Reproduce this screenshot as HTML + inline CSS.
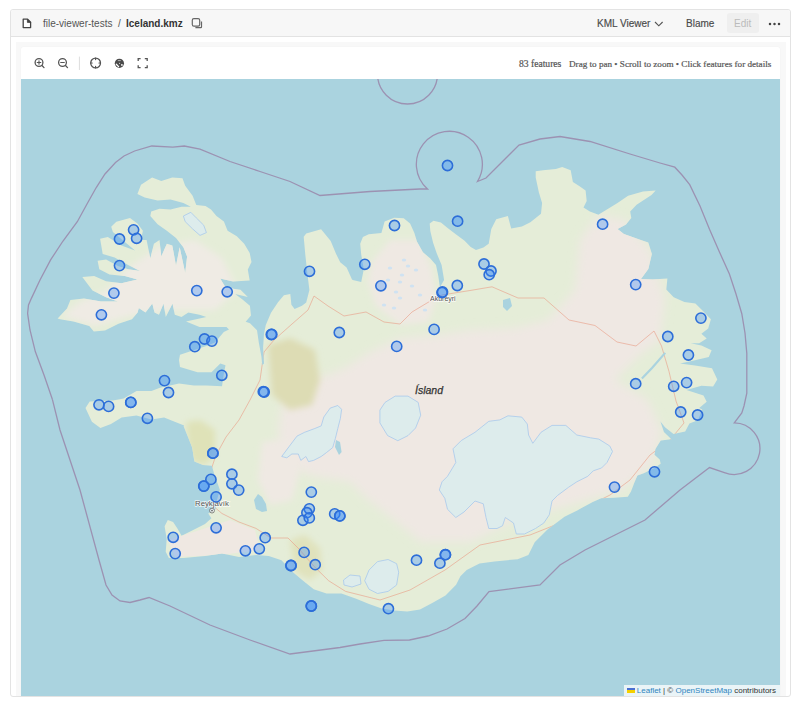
<!DOCTYPE html>
<html><head><meta charset="utf-8">
<style>
html,body{margin:0;padding:0;background:#fff;width:800px;height:706px;overflow:hidden}
body{font-family:"Liberation Sans",sans-serif;position:relative}
.card{position:absolute;left:10px;top:9px;width:779px;height:686px;border:1px solid #e3e3e3;border-radius:3px;overflow:hidden;background:#fff}
.hdr{position:absolute;left:0;top:0;width:779px;height:26px;background:#f7f7f7;border-bottom:1px solid #e3e3e3}
.t{position:absolute;white-space:nowrap;font-size:10px;line-height:12px}
.gray{position:absolute;left:5px;top:32px;width:770px;height:660px;background:#f8f8f8}
.panel{position:absolute;left:10px;top:37px;width:759px;height:660px;background:#fff;border-radius:2px;box-shadow:0 0 1px rgba(0,0,0,0.08)}
.map{position:absolute;left:10px;top:69px;width:759px;height:617px;overflow:hidden}
.attr{position:absolute;right:0;bottom:0;height:11px;background:rgba(255,255,255,0.75);font-size:8px;line-height:11px;padding:0 4px 0 3px;color:#333;white-space:nowrap}
.attr a{color:#2f84c0;text-decoration:none}
</style></head><body>
<div class="card">
 <div class="hdr">
  <svg style="position:absolute;left:11px;top:8px" width="10" height="11" viewBox="0 0 10 11"><path d="M1.2,1.2 H5.6 L8.6,4.2 V9.6 H1.2 Z" fill="#fff" stroke="#444" stroke-width="1.3" stroke-linejoin="round"/><path d="M5.4,1.2 L8.6,4.4 H5.4 Z" fill="#444" stroke="#444" stroke-width="0.8" stroke-linejoin="round"/></svg>
  <span class="t" style="left:32px;top:8px;color:#555">file-viewer-tests</span>
  <span class="t" style="left:107px;top:8px;color:#555">/</span>
  <span class="t" style="left:115px;top:8px;color:#333;font-weight:bold">Iceland.kmz</span>
  <svg style="position:absolute;left:180px;top:8px" width="12" height="11" viewBox="0 0 12 11"><rect x="1.3" y="0.7" width="7.4" height="7.4" rx="1.6" fill="none" stroke="#666" stroke-width="1.2"/><path d="M4.4,9.6 H9.8 Q10.5,9.6 10.5,8.9 V3.6" fill="none" stroke="#666" stroke-width="1.2"/></svg>
  <span class="t" style="left:586px;top:8px;color:#4a4a4a;-webkit-text-stroke:0.15px #4a4a4a">KML Viewer</span>
  <svg style="position:absolute;left:643px;top:11px" width="10" height="6" viewBox="0 0 10 6"><path d="M1,1 L4.8,4.8 L8.6,1" fill="none" stroke="#555" stroke-width="1.15"/></svg>
  <span class="t" style="left:675px;top:8px;color:#4a4a4a;-webkit-text-stroke:0.15px #4a4a4a">Blame</span>
  <div style="position:absolute;left:716px;top:3px;width:32px;height:20px;background:#efefef;border-radius:3px"></div>
  <span class="t" style="left:723px;top:8px;color:#bbb">Edit</span>
  <svg style="position:absolute;left:757px;top:12px" width="13" height="4" viewBox="0 0 13 4"><circle cx="2" cy="2" r="1.25" fill="#444"/><circle cx="6.5" cy="2" r="1.25" fill="#444"/><circle cx="11" cy="2" r="1.25" fill="#444"/></svg>
 </div>
 <div class="gray"></div>
 <div class="panel">
  <svg style="position:absolute;left:0;top:0" width="160" height="32" viewBox="0 0 160 32">
   <g fill="none" stroke="#555" stroke-width="1.3" stroke-linecap="round">
    <circle cx="18" cy="15.5" r="3.9"/><path d="M21,18.5 L23,20.6"/><path d="M16.2,15.5 H19.8 M18,13.7 V17.3" stroke-width="1.1"/>
    <circle cx="41.5" cy="15.5" r="3.9"/><path d="M44.5,18.5 L46.5,20.6"/><path d="M39.7,15.5 H43.3" stroke-width="1.1"/>
    <path d="M58.4,10 V22.6" stroke="#ddd" stroke-width="1"/>
    <circle cx="74.6" cy="16" r="4.9"/><path d="M74.6,11.1 V12.6 M74.6,19.4 V20.9 M69.7,16 H71.2 M78,16 H79.5" stroke-width="1.2"/>
   </g>
   <circle cx="98.4" cy="16.3" r="4.6" fill="#4a4a4a"/>
   <path d="M95.3,17.2 L97.6,19.6" stroke="#fff" stroke-width="1.3" stroke-linecap="round"/>
   <circle cx="100.9" cy="17.9" r="0.9" fill="#fff"/>
   <path d="M97.2,13.6 H99.4" stroke="#bbb" stroke-width="0.9" stroke-linecap="round"/>
   <circle cx="98.6" cy="16.3" r="0.6" fill="#ddd"/>
   <g fill="none" stroke="#555" stroke-width="1.3">
    <path d="M117.2,14 V11.7 H119.6 M123.8,11.7 H126.2 V14 M126.2,18.3 V20.7 H123.8 M119.6,20.7 H117.2 V18.3"/>
   </g>
  </svg>
  <span style="position:absolute;left:498px;top:11px;font-family:'Liberation Serif',serif;font-size:9.6px;line-height:12px;color:#555;-webkit-text-stroke:0.2px #555;white-space:nowrap">83 features</span>
  <span style="position:absolute;left:548px;top:11px;font-family:'Liberation Serif',serif;font-size:9.15px;line-height:12px;color:#555;-webkit-text-stroke:0.2px #555;white-space:nowrap">Drag to pan &bull; Scroll to zoom &bull; Click features for details</span>
 </div>
 <div class="map"><svg width="759" height="617" viewBox="0 0 759 617" style="display:block">
<rect width="759" height="617" fill="#aad3df"/>
<path d="M31.5,320.8 L23.0,296.0 L14.3,272.6 L9.0,251.0 L6.6,234.4 L7.5,226.0 L10.5,219.1 L19.0,201.0 L29.6,180.9 L42.0,162.0 L56.3,142.7 L66.0,125.0 L75.4,108.3 L84.0,95.0 L94.5,83.5 L103.0,77.0 L113.6,72.0 L130.8,67.0 L151.9,68.2 L163.3,67.0 L179.0,70.1 L209.0,82.5 L239.0,92.5 L269.0,102.5 L299.0,116.5 L349.0,112.5 L399.0,110.0 L406.5,110.0 A33,33 0 1 1 456.5,102.5 L465.0,99.0 L498.0,66.0 L519.0,60.0 L539.0,57.5 L569.0,62.5 L609.0,75.0 L639.0,84.0 L653.8,88.2 L661.0,96.0 L668.7,105.6 L679.0,127.0 L688.5,150.3 L698.0,172.0 L708.4,195.0 L715.0,215.0 L720.8,234.7 L724.0,254.0 L725.8,274.4 L725.8,314.2 L723.0,327.0 L720.8,334.0 L713.3,343.9 A25.8,25.8 0 1 1 703.4,393.6 L688.5,388.6 L659.0,411.0 L624.0,441.0 L594.0,456.0 L564.0,471.0 L539.0,486.0 L519.0,506.0 L468.0,512.5 L456.0,527.0 L444.0,539.5 L426.0,550.0 L407.0,557.0 L388.5,561.0 L363.0,561.4 L339.0,565.0 L319.0,568.5 L269.0,575.0 L229.0,561.0 L189.0,546.0 L149.0,527.0 L128.0,518.5 L119.0,521.0 L109.0,523.5 L99.0,522.0 L91.0,516.0 L85.0,506.0 L78.0,481.0 L59.0,411.0 L39.0,351.0 L31.5,320.8" fill="none" stroke="#9c92b2" stroke-width="1.3"/>
<circle cx="386.5" cy="-5" r="30" fill="none" stroke="#9c92b2" stroke-width="1.3"/>
<filter id="blur" x="-10%" y="-10%" width="120%" height="120%"><feGaussianBlur stdDeviation="5"/></filter><filter id="blur2" x="-20%" y="-20%" width="140%" height="140%"><feGaussianBlur stdDeviation="3"/></filter>
<clipPath id="land"><path d="M36.6,239.6 L46.0,229.4 L49.4,220.9 L63.0,219.5 L80.0,222.6 L97.0,222.6 L85.1,218.3 L71.5,211.5 L61.3,197.9 L73.2,197.1 L85.1,202.2 L100.4,204.2 L116.5,200.5 L103.8,197.1 L88.5,195.4 L78.3,190.3 L76.6,181.8 L85.1,180.4 L97.0,186.9 L107.2,190.3 L119.1,192.0 L107.2,186.0 L93.6,178.4 L81.7,175.0 L79.1,159.7 L86.8,158.0 L100.4,166.5 L114.0,171.6 L102.1,161.4 L91.9,152.9 L90.2,147.8 L95.3,142.7 L109.0,138.9 L116.4,144.4 L121.9,151.8 L120.0,161.0 L125.6,161.0 L129.3,179.4 L132.9,164.7 L138.5,161.0 L140.3,177.5 L145.8,164.7 L151.3,166.5 L155.0,186.7 L158.7,168.3 L164.2,194.1 L166.1,177.5 L162.4,168.3 L155.0,159.1 L145.8,151.8 L136.6,145.3 L129.3,137.0 L130.2,132.4 L138.5,129.7 L149.5,130.6 L160.6,127.8 L169.8,127.8 L162.4,124.1 L149.5,120.5 L136.6,121.4 L123.7,118.6 L116.4,114.9 L120.0,105.7 L131.1,98.4 L140.3,102.0 L151.3,98.4 L161.5,99.3 L164.2,106.7 L171.6,116.8 L175.3,126.0 L184.5,126.9 L190.0,130.6 L195.5,137.0 L202.9,142.6 L206.6,151.8 L215.8,157.3 L223.2,164.7 L228.7,173.9 L230.5,183.1 L226.8,190.4 L228.7,201.5 L212.1,202.4 L199.2,199.6 L204.7,208.8 L219.5,210.7 L226.8,218.0 L214.1,215.1 L221.5,220.4 L228.9,226.8 L230.0,236.4 L224.7,242.7 L229.0,244.3 L236.0,251.3 L237.8,263.5 L240.4,277.5 L241.3,286.3 L243.0,284.5 L242.1,268.8 L243.0,254.8 L244.8,246.0 L250.0,233.8 L257.0,223.3 L262.9,216.2 L269.3,215.1 L270.4,225.7 L273.6,230.0 L281.0,226.8 L285.2,223.6 L288.4,210.9 L286.3,193.9 L284.2,174.7 L282.7,157.7 L285.2,154.6 L300.1,150.3 L304.4,155.6 L309.7,162.0 L315.0,174.7 L319.2,183.2 L325.6,188.6 L330.9,200.2 L331.7,200.9 L340.2,203.0 L342.8,190.2 L340.2,175.4 L339.2,164.7 L341.9,157.9 L347.7,155.2 L360.4,154.1 L363.6,142.4 L373.2,138.8 L382.7,139.2 L389.1,144.6 L393.4,154.1 L395.9,162.6 L401.9,173.2 L409.3,179.6 L415.0,186.0 L417.2,196.6 L418.9,208.3 L423.1,200.9 L420.6,186.0 L415.7,174.3 L412.1,163.7 L409.3,152.0 L408.7,144.6 L412.5,141.8 L419.9,143.5 L426.3,148.8 L434.8,155.2 L443.3,161.6 L449.7,167.9 L455.0,171.1 L462.4,168.6 L467.7,164.7 L470.3,149.9 L475.2,140.3 L486.9,137.1 L490.2,149.6 L500.9,147.5 L509.4,143.2 L520.0,134.7 L521.1,124.1 L517.9,113.5 L514.7,98.6 L514.7,92.2 L522.1,91.2 L534.9,90.1 L541.2,88.0 L549.7,91.2 L551.9,102.9 L558.2,107.1 L564.6,111.4 L565.7,122.0 L562.5,128.4 L568.9,132.6 L577.4,135.8 L585.9,130.5 L596.5,124.1 L607.1,116.7 L622.0,112.4 L634.7,111.4 L630.5,116.0 L615.6,125.8 L609.2,132.6 L610.3,139.0 L605.0,145.4 L596.5,150.0 L602.9,154.9 L617.7,160.2 L627.3,163.4 L630.9,175.1 L627.3,190.0 L620.3,199.6 L620.0,200.1 L631.5,200.6 L646.4,199.5 L645.3,210.5 L652.7,218.2 L663.4,222.9 L674.4,224.6 L682.5,232.4 L689.9,240.3 L687.2,249.4 L680.4,254.7 L685.7,259.4 L678.2,264.3 L669.7,264.3 L680.4,266.4 L690.6,271.3 L687.8,278.1 L674.0,281.3 L659.1,284.5 L674.0,286.6 L691.0,289.2 L696.3,300.4 L692.1,307.4 L680.4,306.8 L665.5,311.1 L682.5,316.4 L685.7,322.7 L678.2,329.1 L681.2,330.6 L676.9,341.2 L668.4,344.4 L664.2,352.4 L652.5,355.0 L644.0,348.2 L639.3,342.2 L642.9,352.9 L650.4,360.3 L639.7,361.4 L634.4,369.9 L633.4,375.8 L638.7,380.5 L639.7,384.7 L633.4,389.0 L622.7,394.3 L616.4,396.4 L613.2,403.9 L610.0,412.4 L606.8,417.7 L593.0,418.7 L580.2,419.2 L571.7,423.0 L556.2,431.4 L543.5,437.7 L526.5,450.5 L513.7,463.2 L507.4,476.0 L496.7,480.2 L473.4,482.4 L458.5,484.5 L445.7,490.9 L439.4,497.2 L435.1,505.7 L424.5,516.4 L411.7,523.8 L399.0,530.4 L386.2,532.6 L373.5,531.5 L360.7,529.4 L348.0,525.1 L335.2,519.8 L320.4,514.5 L305.5,514.5 L292.7,510.2 L282.1,501.7 L269.4,491.1 L260.5,481.2 L247.7,477.0 L235.0,475.9 L218.0,478.1 L201.0,474.4 L184.0,477.0 L162.7,479.1 L147.9,479.1 L144.7,472.7 L145.7,460.0 L143.6,447.2 L146.8,440.9 L152.1,443.0 L156.4,449.4 L160.6,456.8 L171.2,451.5 L184.0,445.1 L190.4,439.2 L187.2,434.5 L194.6,430.2 L195.7,421.7 L198.9,411.1 L196.7,404.7 L193.6,396.2 L190.8,386.7 L181.9,386.0 L173.4,382.4 L171.2,368.6 L167.0,358.0 L162.7,347.4 L164.9,341.0 L179.2,361.0 L170.7,355.5 L164.4,347.0 L153.7,342.7 L143.1,338.5 L130.4,340.6 L115.5,336.4 L100.6,338.5 L90.0,344.9 L79.4,349.1 L70.9,342.7 L64.5,328.9 L68.7,322.6 L92.1,321.5 L102.7,319.4 L115.5,311.9 L130.4,311.9 L138.9,308.7 L158.0,304.5 L172.9,306.6 L185.3,306.4 L201.0,307.3 L202.8,295.0 L204.5,286.3 L199.3,284.5 L190.5,293.3 L176.5,293.3 L159.0,288.0 L158.0,281.1 L159.0,275.8 L185.3,267.0 L194.0,263.5 L202.8,253.0 L208.0,250.4 L205.5,248.1 L178.5,248.1 L165.0,242.5 L185.3,238.0 L178.5,235.8 L167.3,233.5 L160.5,238.0 L153.8,235.8 L151.5,224.5 L144.8,238.0 L142.5,224.5 L138.0,235.8 L133.5,233.5 L131.3,224.5 L124.5,233.5 L117.8,229.0 L116.6,233.5 L111.0,240.3 L97.5,244.8 L84.0,251.5 L72.8,252.6 L68.3,247.0 L52.5,242.5 L39.0,240.3Z"/></clipPath>
<path d="M36.6,239.6 L46.0,229.4 L49.4,220.9 L63.0,219.5 L80.0,222.6 L97.0,222.6 L85.1,218.3 L71.5,211.5 L61.3,197.9 L73.2,197.1 L85.1,202.2 L100.4,204.2 L116.5,200.5 L103.8,197.1 L88.5,195.4 L78.3,190.3 L76.6,181.8 L85.1,180.4 L97.0,186.9 L107.2,190.3 L119.1,192.0 L107.2,186.0 L93.6,178.4 L81.7,175.0 L79.1,159.7 L86.8,158.0 L100.4,166.5 L114.0,171.6 L102.1,161.4 L91.9,152.9 L90.2,147.8 L95.3,142.7 L109.0,138.9 L116.4,144.4 L121.9,151.8 L120.0,161.0 L125.6,161.0 L129.3,179.4 L132.9,164.7 L138.5,161.0 L140.3,177.5 L145.8,164.7 L151.3,166.5 L155.0,186.7 L158.7,168.3 L164.2,194.1 L166.1,177.5 L162.4,168.3 L155.0,159.1 L145.8,151.8 L136.6,145.3 L129.3,137.0 L130.2,132.4 L138.5,129.7 L149.5,130.6 L160.6,127.8 L169.8,127.8 L162.4,124.1 L149.5,120.5 L136.6,121.4 L123.7,118.6 L116.4,114.9 L120.0,105.7 L131.1,98.4 L140.3,102.0 L151.3,98.4 L161.5,99.3 L164.2,106.7 L171.6,116.8 L175.3,126.0 L184.5,126.9 L190.0,130.6 L195.5,137.0 L202.9,142.6 L206.6,151.8 L215.8,157.3 L223.2,164.7 L228.7,173.9 L230.5,183.1 L226.8,190.4 L228.7,201.5 L212.1,202.4 L199.2,199.6 L204.7,208.8 L219.5,210.7 L226.8,218.0 L214.1,215.1 L221.5,220.4 L228.9,226.8 L230.0,236.4 L224.7,242.7 L229.0,244.3 L236.0,251.3 L237.8,263.5 L240.4,277.5 L241.3,286.3 L243.0,284.5 L242.1,268.8 L243.0,254.8 L244.8,246.0 L250.0,233.8 L257.0,223.3 L262.9,216.2 L269.3,215.1 L270.4,225.7 L273.6,230.0 L281.0,226.8 L285.2,223.6 L288.4,210.9 L286.3,193.9 L284.2,174.7 L282.7,157.7 L285.2,154.6 L300.1,150.3 L304.4,155.6 L309.7,162.0 L315.0,174.7 L319.2,183.2 L325.6,188.6 L330.9,200.2 L331.7,200.9 L340.2,203.0 L342.8,190.2 L340.2,175.4 L339.2,164.7 L341.9,157.9 L347.7,155.2 L360.4,154.1 L363.6,142.4 L373.2,138.8 L382.7,139.2 L389.1,144.6 L393.4,154.1 L395.9,162.6 L401.9,173.2 L409.3,179.6 L415.0,186.0 L417.2,196.6 L418.9,208.3 L423.1,200.9 L420.6,186.0 L415.7,174.3 L412.1,163.7 L409.3,152.0 L408.7,144.6 L412.5,141.8 L419.9,143.5 L426.3,148.8 L434.8,155.2 L443.3,161.6 L449.7,167.9 L455.0,171.1 L462.4,168.6 L467.7,164.7 L470.3,149.9 L475.2,140.3 L486.9,137.1 L490.2,149.6 L500.9,147.5 L509.4,143.2 L520.0,134.7 L521.1,124.1 L517.9,113.5 L514.7,98.6 L514.7,92.2 L522.1,91.2 L534.9,90.1 L541.2,88.0 L549.7,91.2 L551.9,102.9 L558.2,107.1 L564.6,111.4 L565.7,122.0 L562.5,128.4 L568.9,132.6 L577.4,135.8 L585.9,130.5 L596.5,124.1 L607.1,116.7 L622.0,112.4 L634.7,111.4 L630.5,116.0 L615.6,125.8 L609.2,132.6 L610.3,139.0 L605.0,145.4 L596.5,150.0 L602.9,154.9 L617.7,160.2 L627.3,163.4 L630.9,175.1 L627.3,190.0 L620.3,199.6 L620.0,200.1 L631.5,200.6 L646.4,199.5 L645.3,210.5 L652.7,218.2 L663.4,222.9 L674.4,224.6 L682.5,232.4 L689.9,240.3 L687.2,249.4 L680.4,254.7 L685.7,259.4 L678.2,264.3 L669.7,264.3 L680.4,266.4 L690.6,271.3 L687.8,278.1 L674.0,281.3 L659.1,284.5 L674.0,286.6 L691.0,289.2 L696.3,300.4 L692.1,307.4 L680.4,306.8 L665.5,311.1 L682.5,316.4 L685.7,322.7 L678.2,329.1 L681.2,330.6 L676.9,341.2 L668.4,344.4 L664.2,352.4 L652.5,355.0 L644.0,348.2 L639.3,342.2 L642.9,352.9 L650.4,360.3 L639.7,361.4 L634.4,369.9 L633.4,375.8 L638.7,380.5 L639.7,384.7 L633.4,389.0 L622.7,394.3 L616.4,396.4 L613.2,403.9 L610.0,412.4 L606.8,417.7 L593.0,418.7 L580.2,419.2 L571.7,423.0 L556.2,431.4 L543.5,437.7 L526.5,450.5 L513.7,463.2 L507.4,476.0 L496.7,480.2 L473.4,482.4 L458.5,484.5 L445.7,490.9 L439.4,497.2 L435.1,505.7 L424.5,516.4 L411.7,523.8 L399.0,530.4 L386.2,532.6 L373.5,531.5 L360.7,529.4 L348.0,525.1 L335.2,519.8 L320.4,514.5 L305.5,514.5 L292.7,510.2 L282.1,501.7 L269.4,491.1 L260.5,481.2 L247.7,477.0 L235.0,475.9 L218.0,478.1 L201.0,474.4 L184.0,477.0 L162.7,479.1 L147.9,479.1 L144.7,472.7 L145.7,460.0 L143.6,447.2 L146.8,440.9 L152.1,443.0 L156.4,449.4 L160.6,456.8 L171.2,451.5 L184.0,445.1 L190.4,439.2 L187.2,434.5 L194.6,430.2 L195.7,421.7 L198.9,411.1 L196.7,404.7 L193.6,396.2 L190.8,386.7 L181.9,386.0 L173.4,382.4 L171.2,368.6 L167.0,358.0 L162.7,347.4 L164.9,341.0 L179.2,361.0 L170.7,355.5 L164.4,347.0 L153.7,342.7 L143.1,338.5 L130.4,340.6 L115.5,336.4 L100.6,338.5 L90.0,344.9 L79.4,349.1 L70.9,342.7 L64.5,328.9 L68.7,322.6 L92.1,321.5 L102.7,319.4 L115.5,311.9 L130.4,311.9 L138.9,308.7 L158.0,304.5 L172.9,306.6 L185.3,306.4 L201.0,307.3 L202.8,295.0 L204.5,286.3 L199.3,284.5 L190.5,293.3 L176.5,293.3 L159.0,288.0 L158.0,281.1 L159.0,275.8 L185.3,267.0 L194.0,263.5 L202.8,253.0 L208.0,250.4 L205.5,248.1 L178.5,248.1 L165.0,242.5 L185.3,238.0 L178.5,235.8 L167.3,233.5 L160.5,238.0 L153.8,235.8 L151.5,224.5 L144.8,238.0 L142.5,224.5 L138.0,235.8 L133.5,233.5 L131.3,224.5 L124.5,233.5 L117.8,229.0 L116.6,233.5 L111.0,240.3 L97.5,244.8 L84.0,251.5 L72.8,252.6 L68.3,247.0 L52.5,242.5 L39.0,240.3Z" fill="#e5edd8" stroke="none"/>
<g clip-path="url(#land)">
<path d="M263.0,315.0 L269.0,287.0 L301.0,298.0 L324.0,289.0 L349.0,273.0 L379.0,259.0 L419.0,256.0 L449.0,251.0 L494.0,249.0 L527.0,241.0 L554.0,211.0 L559.0,161.0 L577.0,136.0 L604.0,141.0 L629.0,171.0 L644.0,221.0 L639.0,261.0 L619.0,276.0 L594.0,301.0 L627.0,321.0 L641.0,353.0 L631.0,386.0 L601.0,411.0 L549.0,426.0 L494.0,441.0 L450.0,463.0 L400.0,463.0 L373.0,441.0 L345.0,419.0 L329.0,403.0 L291.0,397.0 L263.0,386.0 L257.0,353.0Z" fill="#efe8e3" filter="url(#blur)"/>
<path d="M41.0,237.0 L59.0,223.0 L89.0,209.0 L107.0,189.0 L139.0,167.0 L174.0,161.0 L201.0,179.0 L217.0,211.0 L194.0,231.0 L149.0,231.0 L109.0,237.0 L74.0,247.0Z" fill="#efebe4" filter="url(#blur2)"/>
<path d="M147.0,461.0 L179.0,451.0 L209.0,441.0 L234.0,451.0 L239.0,471.0 L199.0,476.0 L154.0,478.0Z" fill="#efe8e2"/>
<path d="M351.0,183.0 L369.0,161.0 L399.0,161.0 L411.0,191.0 L415.0,221.0 L407.0,243.0 L379.0,246.0 L354.0,226.0 L347.0,201.0Z" fill="#efe9e3" filter="url(#blur2)"/>
<path d="M241.0,363.0 L269.0,359.0 L279.0,391.0 L271.0,421.0 L249.0,426.0 L237.0,401.0Z" fill="#efe9e3" filter="url(#blur2)"/>
<ellipse cx="369" cy="189" rx="2.2" ry="1.6" fill="#cfe2f2"/><ellipse cx="381" cy="196" rx="2.2" ry="1.6" fill="#cfe2f2"/><ellipse cx="379" cy="203" rx="2.2" ry="1.6" fill="#cfe2f2"/><ellipse cx="395" cy="191" rx="2.2" ry="1.6" fill="#cfe2f2"/><ellipse cx="391" cy="207" rx="2.2" ry="1.6" fill="#cfe2f2"/><ellipse cx="375" cy="213" rx="2.2" ry="1.6" fill="#cfe2f2"/><ellipse cx="379" cy="219" rx="2.2" ry="1.6" fill="#cfe2f2"/><ellipse cx="363" cy="226" rx="2.2" ry="1.6" fill="#cfe2f2"/><ellipse cx="373" cy="229" rx="2.2" ry="1.6" fill="#cfe2f2"/><ellipse cx="404" cy="231" rx="2.2" ry="1.6" fill="#cfe2f2"/><ellipse cx="383" cy="181" rx="2.2" ry="1.6" fill="#cfe2f2"/><ellipse cx="399" cy="216" rx="2.2" ry="1.6" fill="#cfe2f2"/><ellipse cx="367" cy="201" rx="2.2" ry="1.6" fill="#cfe2f2"/><ellipse cx="387" cy="187" rx="2.2" ry="1.6" fill="#cfe2f2"/>
<path d="M247.0,266.0 L269.0,259.0 L294.0,271.0 L299.0,301.0 L291.0,326.0 L269.0,331.0 L251.0,316.0Z" fill="#dddcb4" filter="url(#blur2)"/><path d="M165.0,343.0 L179.0,341.0 L194.0,351.0 L194.0,376.0 L184.0,386.0 L171.0,383.0 L167.0,366.0Z" fill="#dfe2b8" filter="url(#blur2)"/><path d="M269.0,461.0 L284.0,456.0 L299.0,469.0 L301.0,491.0 L289.0,501.0 L274.0,493.0Z" fill="#e0e2bc" filter="url(#blur2)"/>
<path d="M191.0,426.0 L192.5,411.0 L190.4,390.0 L194.6,377.0 L205.0,358.0 L218.0,341.0 L229.0,321.0 L239.0,301.0 L243.0,273.0 L253.0,261.0 L271.0,245.0 L287.0,231.0 L293.0,217.0 L307.0,227.0 L323.0,237.0 L345.0,233.0 L363.0,243.0 L379.0,245.0 L391.0,233.0 L411.0,221.0 L421.0,216.0 L449.0,211.5 L471.0,207.8 L497.0,219.0 L523.0,219.0 L548.0,241.0 L574.0,246.5 L596.0,263.0 L615.0,267.0 L633.0,252.0 L640.5,267.0 L648.0,292.5 L655.0,322.0 L663.0,344.0 L649.0,361.0 L629.0,376.0 L609.0,401.0 L589.0,416.0 L559.0,431.0 L534.0,446.0 L509.0,456.0 L484.0,461.0 L459.0,466.0 L424.0,491.0 L389.0,511.0 L359.0,521.0 L324.6,512.4 L307.6,501.7 L292.7,487.0 L278.0,470.0 L267.0,459.0 L250.0,459.0 L235.0,449.4 L218.0,443.0 L201.0,434.5 L191.0,426.0" fill="none" stroke="#e9a08a" stroke-width="0.8" opacity="0.8"/>
<path d="M233.0,421.0 L237.0,415.0 L241.0,418.0 L245.0,425.0 L246.0,432.0 L241.0,433.0 L235.0,430.0Z" fill="#aad3df"/><path d="M315.0,361.0 L319.0,363.0 L320.6,373.0 L318.0,376.0 L314.0,368.0Z" fill="#aad3df"/><path d="M482.0,221.0 L489.0,219.0 L491.0,227.0 L486.0,232.0 L482.0,228.0Z" fill="#aad3df"/>
<path d="M620.9,299.4 L631.0,289.0 L644.2,273.9" fill="none" stroke="#aad3df" stroke-width="2.2"/>
</g>
<g fill="#ddecec" stroke="#a8c9ec" stroke-width="0.8">
<path d="M426.5,397.3 L434.8,383.5 L432.0,369.8 L440.3,361.5 L454.0,353.3 L467.8,342.3 L478.8,340.9 L487.0,336.8 L500.8,338.1 L506.3,345.0 L507.6,356.0 L511.8,364.3 L520.0,353.3 L531.0,346.4 L544.8,346.4 L555.8,356.0 L569.5,358.8 L577.8,360.1 L588.8,367.0 L591.5,372.5 L586.0,383.5 L580.5,389.0 L572.3,391.8 L566.8,397.3 L555.8,402.8 L547.5,408.3 L536.5,416.5 L531.0,422.0 L528.3,435.8 L522.8,444.0 L514.5,449.5 L503.5,455.0 L495.3,455.0 L492.5,444.0 L484.3,438.5 L481.5,446.8 L476.0,449.5 L467.8,449.5 L465.0,438.5 L462.3,424.8 L454.0,422.0 L443.0,433.0 L434.8,438.5 L426.5,430.3 L423.8,419.3 L418.3,411.0 L421.0,402.8Z"/><path d="M260.7,377.5 L268.3,367.3 L276.0,357.1 L283.6,353.3 L293.8,349.5 L300.2,346.9 L302.8,338.0 L309.2,329.1 L316.8,326.5 L320.6,330.3 L319.4,339.3 L316.8,349.5 L314.3,359.7 L311.7,368.6 L305.3,373.7 L300.2,377.5 L292.6,381.4 L287.5,382.6 L284.9,377.5 L279.8,381.4 L277.3,375.0 L270.9,375.0 L265.8,378.8Z"/><path d="M364.0,323.4 L374.2,317.1 L387.0,317.1 L397.2,323.4 L399.7,336.2 L394.6,349.0 L387.0,356.6 L376.8,361.7 L366.6,356.6 L358.9,343.9 L358.9,331.1Z"/><path d="M348.0,491.1 L356.5,482.6 L367.1,480.5 L375.6,484.7 L377.7,493.2 L375.6,506.0 L367.1,512.4 L356.5,514.5 L348.0,510.2 L343.7,501.7Z"/><path d="M322.5,501.0 L329.0,496.0 L339.0,497.0 L340.0,505.0 L331.0,508.0 L323.0,506.0Z"/><path d="M162.4,137.0 L169.8,133.3 L175.3,138.9 L182.7,146.2 L185.4,153.6 L179.0,156.4 L171.6,149.9 L164.2,142.6Z"/>
</g>
<g font-family="Liberation Sans, sans-serif" fill="#333">
<text x="394" y="315" font-size="10.5" font-style="italic" stroke="#333" stroke-width="0.25">Ísland</text>
<text x="174" y="427" font-size="7.8" fill="#555" stroke="rgba(255,255,255,0.75)" stroke-width="1.6" paint-order="stroke">Reykjavík</text>
<circle cx="191" cy="431.6" r="2.4" fill="rgba(255,255,255,0.7)" stroke="#666" stroke-width="0.8"/><circle cx="191" cy="431.6" r="0.9" fill="#666"/>
<text x="409" y="222" font-size="7" fill="#555" stroke="rgba(255,255,255,0.75)" stroke-width="1.4" paint-order="stroke">Akureyri</text>
</g>
<g fill="rgba(51,136,255,0.33)" stroke="#2d6ed8" stroke-width="1.6"><circle cx="426.5" cy="86.5" r="5.1"/><circle cx="112.6" cy="150.8" r="5.1"/><circle cx="115.6" cy="159.3" r="5.1"/><circle cx="98.5" cy="160.0" r="5.1"/><circle cx="98.5" cy="186.6" r="5.1"/><circle cx="92.9" cy="214.1" r="5.1"/><circle cx="80.4" cy="235.8" r="5.1"/><circle cx="175.8" cy="211.6" r="5.1"/><circle cx="206.2" cy="212.8" r="5.1"/><circle cx="250.3" cy="255.5" r="5.1"/><circle cx="250.8" cy="255.4" r="5.1"/><circle cx="183.5" cy="260.0" r="5.1"/><circle cx="190.9" cy="262.1" r="5.1"/><circle cx="173.8" cy="267.7" r="5.1"/><circle cx="200.8" cy="296.3" r="5.1"/><circle cx="143.5" cy="301.6" r="5.1"/><circle cx="373.5" cy="146.5" r="5.1"/><circle cx="436.6" cy="142.2" r="5.1"/><circle cx="288.5" cy="192.3" r="5.1"/><circle cx="343.8" cy="185.3" r="5.1"/><circle cx="359.9" cy="206.8" r="5.1"/><circle cx="421.0" cy="213.6" r="5.1"/><circle cx="421.5" cy="213.0" r="5.1"/><circle cx="436.3" cy="206.5" r="5.1"/><circle cx="318.3" cy="253.5" r="5.1"/><circle cx="413.1" cy="250.4" r="5.1"/><circle cx="375.7" cy="267.4" r="5.1"/><circle cx="243.2" cy="313.0" r="5.1"/><circle cx="581.6" cy="145.2" r="5.1"/><circle cx="463.0" cy="185.0" r="5.1"/><circle cx="470.0" cy="192.0" r="5.1"/><circle cx="468.2" cy="195.7" r="5.1"/><circle cx="614.7" cy="205.6" r="5.1"/><circle cx="679.9" cy="239.1" r="5.1"/><circle cx="646.8" cy="257.5" r="5.1"/><circle cx="667.4" cy="276.0" r="5.1"/><circle cx="614.7" cy="304.7" r="5.1"/><circle cx="652.7" cy="307.3" r="5.1"/><circle cx="665.6" cy="303.6" r="5.1"/><circle cx="659.7" cy="333.0" r="5.1"/><circle cx="676.6" cy="336.0" r="5.1"/><circle cx="147.5" cy="313.5" r="5.1"/><circle cx="242.3" cy="312.7" r="5.1"/><circle cx="78.0" cy="325.8" r="5.1"/><circle cx="87.6" cy="327.4" r="5.1"/><circle cx="109.8" cy="323.4" r="5.1"/><circle cx="109.8" cy="323.4" r="5.1"/><circle cx="126.4" cy="339.3" r="5.1"/><circle cx="191.9" cy="374.2" r="5.1"/><circle cx="191.9" cy="374.2" r="5.1"/><circle cx="189.9" cy="400.4" r="5.1"/><circle cx="182.8" cy="407.1" r="5.1"/><circle cx="182.8" cy="407.1" r="5.1"/><circle cx="210.9" cy="395.2" r="5.1"/><circle cx="210.9" cy="404.8" r="5.1"/><circle cx="217.7" cy="411.1" r="5.1"/><circle cx="195.1" cy="417.9" r="5.1"/><circle cx="195.1" cy="448.8" r="5.1"/><circle cx="152.2" cy="458.3" r="5.1"/><circle cx="154.2" cy="474.6" r="5.1"/><circle cx="224.4" cy="471.8" r="5.1"/><circle cx="238.3" cy="469.8" r="5.1"/><circle cx="244.2" cy="458.7" r="5.1"/><circle cx="290.3" cy="413.1" r="5.1"/><circle cx="288.3" cy="429.8" r="5.1"/><circle cx="285.9" cy="433.7" r="5.1"/><circle cx="281.9" cy="441.3" r="5.1"/><circle cx="288.3" cy="438.9" r="5.1"/><circle cx="313.7" cy="434.9" r="5.1"/><circle cx="318.8" cy="436.9" r="5.1"/><circle cx="318.8" cy="436.9" r="5.1"/><circle cx="283.1" cy="473.4" r="5.1"/><circle cx="270.0" cy="486.5" r="5.1"/><circle cx="270.0" cy="486.5" r="5.1"/><circle cx="294.2" cy="485.7" r="5.1"/><circle cx="290.3" cy="527.0" r="5.1"/><circle cx="290.3" cy="527.0" r="5.1"/><circle cx="395.5" cy="481.2" r="5.1"/><circle cx="424.4" cy="475.7" r="5.1"/><circle cx="424.4" cy="475.7" r="5.1"/><circle cx="418.9" cy="484.2" r="5.1"/><circle cx="367.4" cy="529.7" r="5.1"/><circle cx="593.5" cy="408.1" r="5.1"/><circle cx="633.5" cy="392.8" r="5.1"/></g>
</svg>
  <div class="attr"><span style="display:inline-block;width:8px;height:5px;vertical-align:-0px;background:linear-gradient(#4a6fd0 50%,#f5d000 50%);margin-right:2px"></span><a>Leaflet</a> | © <a>OpenStreetMap</a> contributors</div>
 </div>
</div>
</body></html>
